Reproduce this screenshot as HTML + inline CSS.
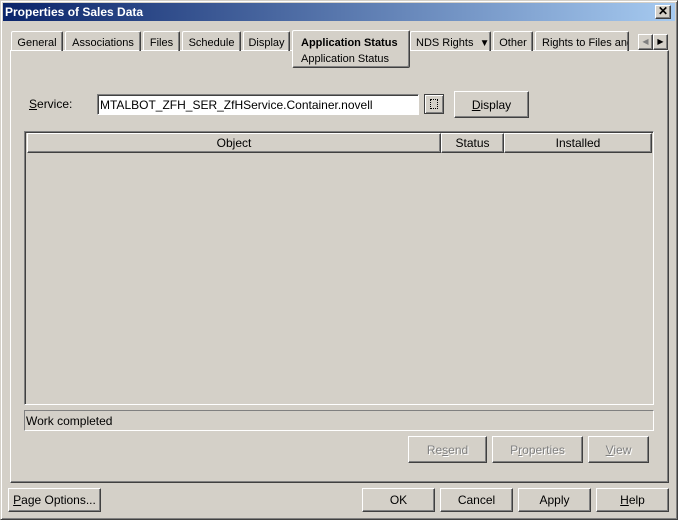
<!DOCTYPE html>
<html><head><style>
body{margin:0;width:678px;height:520px;background:#d4d0c8;position:relative;overflow:hidden;font-family:"Liberation Sans",Arial,sans-serif;font-size:12px;color:#000}
.a{position:absolute;box-sizing:border-box;white-space:nowrap}
.btn{border:1px solid;border-color:#fff #404040 #404040 #fff;box-shadow:inset -1px -1px 0 #808080;text-align:center;background:#d4d0c8}
.dis{color:#808080;text-shadow:1px 1px 0 #fff}
.tab{border:1px solid;border-color:#fff #404040 transparent #fff;border-bottom:none;text-align:center;padding-top:5px;height:20px;top:31px;border-radius:2px 2px 0 0;box-shadow:inset -1px 0 0 #808080;font-size:11px}
.sunk{border:1px solid;border-color:#808080 #fff #fff #808080;box-shadow:inset 1px 1px 0 #404040}
.hd{border:1px solid;border-color:#fff #404040 #404040 #fff;box-shadow:inset -1px -1px 0 #808080;text-align:center;padding-top:2px;top:133px;height:20px}
u{text-decoration:underline}
</style></head><body>
<div class="a" style="left:0;top:0;width:678px;height:520px;border:1px solid;border-color:#d4d0c8 #404040 #404040 #d4d0c8;box-shadow:inset 1px 1px 0 #fff,inset -1px -1px 0 #808080"></div>
<div class="a" style="left:3px;top:3px;width:672px;height:18px;background:linear-gradient(to right,#0a246a,#a6caf0);color:#fff;font-weight:bold;padding:2px 0 0 2px">Properties of Sales Data</div>
<div class="a btn" style="left:655px;top:5px;width:16px;height:14px;font-size:12px;line-height:11px;font-weight:bold">✕</div>
<div class="a" style="left:10px;top:50px;width:659px;height:433px;border:1px solid;border-color:#fff #404040 #404040 #fff;box-shadow:inset -1px -1px 0 #808080"></div>
<div class="a tab" style="left:11px;width:52px">General</div>
<div class="a tab" style="left:65px;width:76px">Associations</div>
<div class="a tab" style="left:143px;width:37px">Files</div>
<div class="a tab" style="left:182px;width:59px">Schedule</div>
<div class="a tab" style="left:243px;width:47px">Display</div>
<div class="a tab" style="left:410px;width:81px;text-align:left;padding-left:5px">NDS Rights&nbsp; <span style="font-size:10px">▼</span></div>
<div class="a tab" style="left:493px;width:40px">Other</div>
<div class="a tab" style="left:535px;width:94px;overflow:hidden;text-align:left;padding-left:6px">Rights to Files and</div>
<div class="a" style="left:292px;top:30px;width:118px;height:38px;background:#d4d0c8;border:1px solid;border-color:#fff #404040 #404040 #fff;box-shadow:inset -1px -1px 0 #808080;border-radius:2px;padding:4px 0 0 8px;line-height:16px;font-size:11px"><b>Application Status</b><br>Application Status</div>
<div class="a btn" style="left:638px;top:34px;width:15px;height:16px;font-size:8px;line-height:14px;color:#808080">◀</div>
<div class="a btn" style="left:653px;top:34px;width:15px;height:16px;font-size:8px;line-height:14px">▶</div>
<div class="a" style="left:29px;top:97px"><u>S</u>ervice:</div>
<div class="a sunk" style="left:97px;top:94px;width:322px;height:21px;background:#fff;padding:3px 0 0 2px">MTALBOT_ZFH_SER_ZfHService.Container.novell</div>
<div class="a" style="left:424px;top:94px;width:20px;height:20px;border:1px solid #404040;box-shadow:inset 1px 1px 0 #fff,inset -1px -1px 0 #808080"><div class="a" style="left:5px;top:4px;width:8px;height:10px;border:1px dotted #000"></div></div>
<div class="a btn" style="left:454px;top:91px;width:75px;height:27px;padding-top:6px"><u>D</u>isplay</div>
<div class="a sunk" style="left:24px;top:131px;width:630px;height:274px;background:#d4d0c8"></div>
<div class="a hd" style="left:27px;width:414px">Object</div>
<div class="a hd" style="left:441px;width:63px">Status</div>
<div class="a hd" style="left:504px;width:148px">Installed</div>
<div class="a" style="left:24px;top:410px;width:630px;height:21px;border:1px solid;border-color:#808080 #fff #fff #808080;padding:3px 0 0 1px">Work completed</div>
<div class="a btn dis" style="left:408px;top:436px;width:79px;height:27px;padding-top:6px">Re<u>s</u>end</div>
<div class="a btn dis" style="left:492px;top:436px;width:91px;height:27px;padding-top:6px">P<u>r</u>operties</div>
<div class="a btn dis" style="left:588px;top:436px;width:61px;height:27px;padding-top:6px"><u>V</u>iew</div>
<div class="a btn" style="left:8px;top:488px;width:93px;height:24px;padding-top:4px"><u>P</u>age Options...</div>
<div class="a btn" style="left:362px;top:488px;width:73px;height:24px;padding-top:4px">OK</div>
<div class="a btn" style="left:440px;top:488px;width:73px;height:24px;padding-top:4px">Cancel</div>
<div class="a btn" style="left:518px;top:488px;width:73px;height:24px;padding-top:4px">Apply</div>
<div class="a btn" style="left:596px;top:488px;width:73px;height:24px;padding-top:4px"><u>H</u>elp</div>
</body></html>
